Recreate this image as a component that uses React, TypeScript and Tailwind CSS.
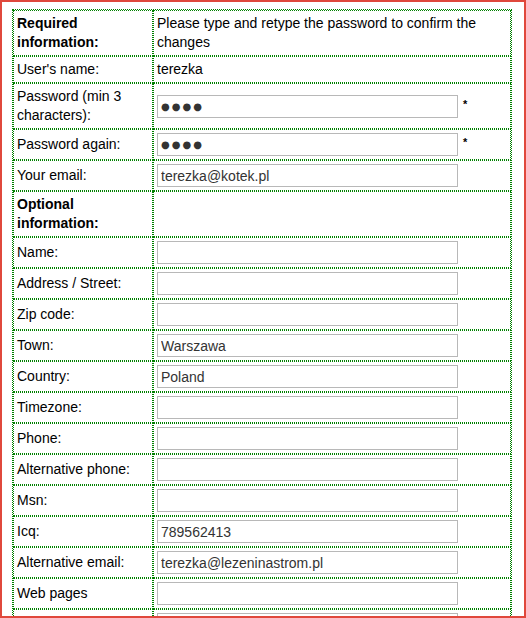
import React from "react";

type Field = { label: React.ReactNode; value?: string; secret?: boolean; star?: boolean };

const required: Field[] = [
  { label: "Password (min 3 characters):", value: "●●●●", secret: true, star: true },
  { label: "Password again:", value: "●●●●", secret: true, star: true },
  { label: "Your email:", value: "terezka@kotek.pl" },
];

const optional: Field[] = [
  { label: "Name:" },
  { label: "Address / Street:" },
  { label: "Zip code:" },
  { label: "Town:", value: "Warszawa" },
  { label: "Country:", value: "Poland" },
  { label: "Timezone:" },
  { label: "Phone:" },
  { label: "Alternative phone:" },
  { label: "Msn:" },
  { label: "Icq:", value: "789562413" },
  { label: "Alternative email:", value: "terezka@lezeninastrom.pl" },
  { label: "Web pages" },
  { label: "" },
];

const cell = "border border-dotted border-[#008000] px-[3px] py-[3px] align-middle";

const InputRow = ({ f }: { f: Field }) => (
  <tr>
    <td className={cell}>{f.label}</td>
    <td className={cell}>
      <div className="flex items-center">
        <input
          type="text"
          readOnly={f.secret}
          defaultValue={f.value ?? ""}
          className={
            "h-[23px] w-[301px] border border-[#b8b8b8] bg-white px-[3px] text-[#333] outline-none " +
            (f.secret ? "text-[10px] tracking-[2px]" : "text-[14px]")
          }
          style={{
            fontFamily: f.secret ? '"DejaVu Sans", sans-serif' : '"Liberation Sans", Arial, sans-serif',
          }}
        />
        {f.star && <span className="ml-[5px] -mt-[4px] text-[11px] font-bold">*</span>}
      </div>
    </td>
  </tr>
);

export default function App() {
  return (
    <div
      className="h-[618px] overflow-hidden border-2 border-[#e0483c] bg-white pl-[10px] pt-[7px] text-[14px] leading-[19px] text-black"
      style={{ fontFamily: '"Liberation Sans", Arial, sans-serif' }}
    >
      <table className="w-[500px] table-fixed border-separate border-spacing-0 border border-dotted border-[#008000]">
        <colgroup>
          <col className="w-[140px]" />
          <col />
        </colgroup>
        <tbody>
          <tr>
            <td className={cell + " font-bold"}>Required information:</td>
            <td className={cell}>Please type and retype the password to confirm the changes</td>
          </tr>
          <tr>
            <td className={cell}>User's name:</td>
            <td className={cell}>terezka</td>
          </tr>
          {required.map((f, i) => (
            <InputRow key={i} f={f} />
          ))}
          <tr>
            <td className={cell + " font-bold"}>Optional information:</td>
            <td className={cell}></td>
          </tr>
          {optional.map((f, i) => (
            <InputRow key={i} f={f} />
          ))}
        </tbody>
      </table>
    </div>
  );
}
